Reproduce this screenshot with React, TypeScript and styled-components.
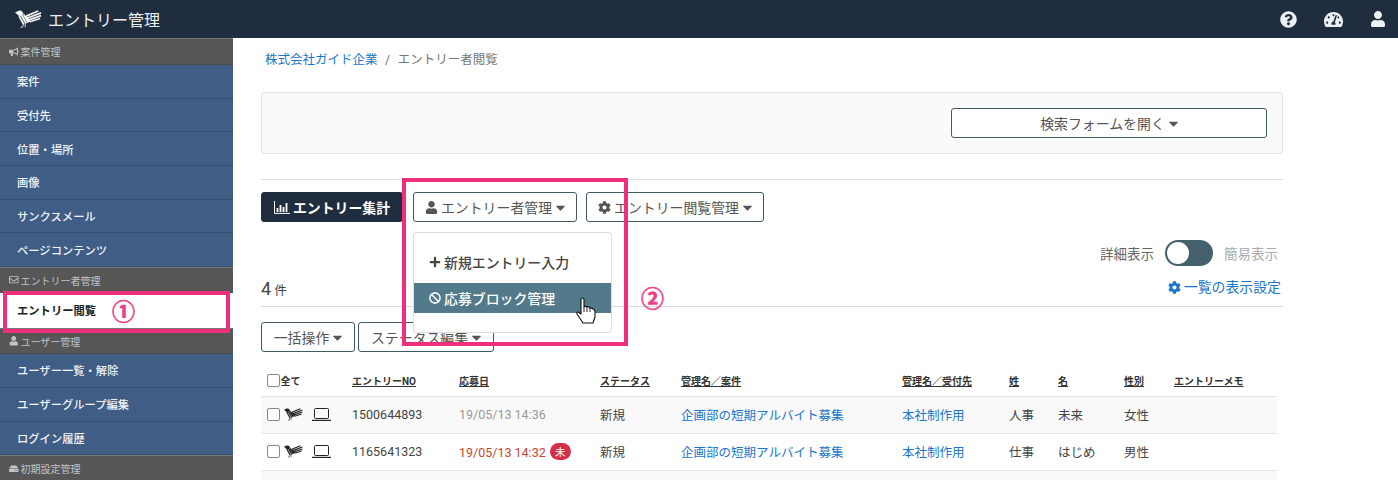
import React from 'react';
import styled, { createGlobalStyle } from 'styled-components';
import {
  FaBan, FaBullhorn, FaCaretDown, FaCog, FaHdd, FaPlus, FaQuestionCircle,
  FaRegEnvelope, FaTachometerAlt, FaUser,
} from 'react-icons/fa';

const GlobalStyle = createGlobalStyle`
  html, body { margin: 0; padding: 0; background: #fff; }
  body { font-family: Roboto, "Noto Sans CJK JP", "Liberation Sans", sans-serif; color: #444; }
  * { box-sizing: border-box; }
`;

//#region Styled Components
const Page = styled.div`
  position: relative;
  width: 1398px;
  height: 480px;
  overflow: hidden;
`;

const NavBar = styled.header`
  height: 38px;
  background: #1f2d3e;
  color: #eef1f3;
  display: flex;
  align-items: center;
  padding: 0 12px 0 15px;
`;

const Brand = styled.div`
  display: flex;
  align-items: center;
  gap: 6px;
  font-size: 16px;
  flex: 1;
`;

const NavIcons = styled.div`
  display: flex;
  align-items: center;
  gap: 27px;
  font-size: 17px;
  svg { display: block; }
`;

const Body = styled.div`
  display: flex;
  height: 442px;
`;

const Sidebar = styled.aside`
  width: 233px;
  flex: none;
  background: #555;
`;

const SideHeading = styled.div<{ $h: number }>`
  height: ${p => p.$h}px;
  background: #565656;
  border-top: 1px solid #777;
  border-bottom: 1px solid #484848;
  color: #c4c4c4;
  font-size: 10px;
  display: flex;
  align-items: center;
  gap: 2px;
  padding-left: 9px;
  svg { font-size: 9.5px; }
`;

const SideItem = styled.div<{ $active?: boolean }>`
  height: ${p => (p.$active ? 35 : 33.7)}px;
  background: ${p => (p.$active ? '#fff' : '#405d86')};
  border-bottom: 1px solid ${p => (p.$active ? '#fff' : '#34506f')};
  color: ${p => (p.$active ? '#222' : '#f2f4f7')};
  font-size: 11.3px;
  font-weight: ${p => (p.$active ? 700 : 500)};
  display: flex;
  align-items: center;
  padding-left: 17px;
`;

const Main = styled.main`
  width: 1022px;
  margin-left: 28px;
  flex: none;
`;

const Crumbs = styled.nav`
  height: 54px;
  padding: 13px 0 0 4px;
  font-size: 12.5px;
  line-height: 18px;
  color: #777;
  display: flex;
  gap: 7.5px;
`;

const Link = styled.a`
  color: #1b75c9;
  text-decoration: none;
`;

const SearchCard = styled.section`
  height: 62px;
  background: #fafafa;
  border: 1px solid #e2e2e2;
  border-radius: 3px;
  display: flex;
  align-items: center;
  justify-content: flex-end;
  padding-right: 15px;
`;

const Button = styled.button<{ $dark?: boolean; $w: number }>`
  width: ${p => p.$w}px;
  height: 30px;
  padding: 0;
  flex: none;
  display: inline-flex;
  align-items: center;
  justify-content: center;
  gap: 3px;
  font: inherit;
  font-size: 13.9px;
  font-weight: ${p => (p.$dark ? 700 : 400)};
  border-radius: 3px;
  border: 1px solid ${p => (p.$dark ? '#1f2d3e' : '#3f5a62')};
  background: ${p => (p.$dark ? '#1f2d3e' : '#fff')};
  color: ${p => (p.$dark ? '#fff' : '#555')};
  svg { flex: none; font-size: 13px; }
`;

const Caret = styled(FaCaretDown)`
  && { font-size: 15px; margin: 0 -3px 0 -2px; }
`;

const Rule = styled.hr`
  margin: 25px 0 12px;
  border: 0;
  border-top: 1px solid #e2e2e2;
`;

const Toolbar = styled.div`
  position: relative;
  display: flex;
  gap: 9px;
`;

const PrimaryWrap = styled.div`
  margin-right: 1px;
`;

const Dropdown = styled.div`
  position: absolute;
  left: 152px;
  top: 40px;
  z-index: 2;
  width: 199px;
  height: 101px;
  padding-top: 14px;
  background: #fff;
  border: 1px solid #ddd;
  border-radius: 3px;
`;

const MenuItem = styled.div<{ $hover?: boolean }>`
  height: 30px;
  display: flex;
  align-items: center;
  gap: 3px;
  padding-left: 15px;
  font-size: 13.9px;
  font-weight: 500;
  background: ${p => (p.$hover ? '#527a8a' : 'transparent')};
  color: ${p => (p.$hover ? '#fff' : '#444')};
  margin-bottom: 6px;
  svg { font-size: 12px; }
`;

const ViewSwitchRow = styled.div`
  height: 30px;
  margin-top: 16px;
  padding-right: 5px;
  display: flex;
  justify-content: flex-end;
  align-items: center;
  gap: 11px;
  font-size: 13.5px;
  color: #666;
`;

const MutedLabel = styled.span`
  color: #aaa;
`;

const Toggle = styled.div`
  width: 48px;
  height: 26px;
  border-radius: 13px;
  background: #43606b;
  padding: 2px;
  &::before {
    content: '';
    display: block;
    width: 22px;
    height: 22px;
    border-radius: 50%;
    background: #fff;
  }
`;

const CountRow = styled.div`
  height: 39px;
  padding-top: 9px;
  border-bottom: 1px solid #dcdcdc;
  display: flex;
  justify-content: space-between;
  align-items: flex-start;
`;

const Count = styled.div`
  font-size: 12.5px;
  padding: 0;
  line-height: 24px;
  color: #444;
  b { font-size: 18px; font-weight: 400; margin-right: 3px; }
`;

const SettingLink = styled(Link)`
  font-size: 13.9px;
  line-height: 20px;
  display: flex;
  align-items: center;
  gap: 3px;
  padding: 0 2px 0 0;
  svg { font-size: 13px; }
`;

const BulkRow = styled.div`
  display: flex;
  gap: 3px;
  margin-top: 15px;
`;

const Table = styled.table`
  width: 1016px;
  margin-top: 13px;
  border-collapse: collapse;
  table-layout: fixed;
  font-size: 12.5px;
`;

const Th = styled.th`
  height: 31px;
  padding: 0;
  text-align: left;
  font-size: 10px;
  font-weight: 700;
  color: #333;
  border-bottom: 1px solid #e6e6e6;
`;

const SortLabel = styled.span`
  text-decoration: underline;
`;

const Row = styled.tr<{ $odd?: boolean }>`
  background: ${p => (p.$odd ? '#f9f9f9' : '#fff')};
`;

const Td = styled.td`
  height: 37px;
  padding: 0;
  color: #444;
  border-bottom: 1px solid #e6e6e6;
  white-space: nowrap;
`;

const CheckCell = styled.div`
  display: flex;
  align-items: center;
  padding-left: 5.5px;
`;

const Check = styled.span`
  width: 13px;
  height: 13px;
  flex: none;
  background: #fff;
  border: 1px solid #888;
  border-radius: 2px;
  margin-right: 4px;
`;

const AllLabel = styled.span`
  margin-left: -3px;
`;

const DateText = styled.span<{ $new?: boolean }>`
  color: ${p => (p.$new ? '#c9472b' : '#999')};
`;

const Badge = styled.span`
  display: inline-flex;
  align-items: center;
  justify-content: center;
  width: 21px;
  height: 17px;
  margin-left: 4px;
  border-radius: 9px;
  background: #d32f4b;
  color: #fff;
  font-size: 10.5px;
  vertical-align: 1px;
`;

const Highlight = styled.div<{ $x: number; $y: number; $w: number; $h: number }>`
  position: absolute;
  left: ${p => p.$x}px;
  top: ${p => p.$y}px;
  width: ${p => p.$w}px;
  height: ${p => p.$h}px;
  border: 4px solid #ee2f7b;
  z-index: 5;
`;

const Mark = styled.div<{ $x: number; $y: number }>`
  position: absolute;
  left: ${p => p.$x}px;
  top: ${p => p.$y}px;
  z-index: 5;
  font-size: 23px;
  line-height: 30px;
  font-weight: 700;
  color: #ee3f85;
  -webkit-text-stroke: 0.6px #ee3f85;
`;

const Cursor = styled.svg`
  position: absolute;
  left: 575px;
  top: 297px;
  z-index: 6;
`;
//#endregion

const Bird: React.FC<{ w: number; color: string }> = ({ w, color }) => (
  <svg width={w} height={w * 0.66} viewBox="0 0 29 19" style={{ display: 'block', flex: 'none' }}>
    <path d="M0 2.5 L4 0.8 Q6.5 0 8 2 L9.5 4.5 L5 7 Z" fill={color} />
    <path d="M4.5 6.5 L9.5 15.5 M7 5.5 L12 14.5 M9.5 5 L14.2 13.5 M11.5 6.5 L16 12.5"
      stroke={color} strokeWidth="2" fill="none" />
    <path d="M12 6.5 L25 1 M13.5 8.5 L28 3 M15 10.5 L28 6 M16 12.5 L27 9"
      stroke={color} strokeWidth="1.8" fill="none" />
    <path d="M9 15.5 L8 18.5 H6 M11 15 V18.5" stroke={color} strokeWidth="0.9" fill="none" />
  </svg>
);

const Laptop = () => (
  <svg width="19" height="13" viewBox="0 0 19 13" style={{ display: 'block', marginLeft: 9 }}>
    <rect x="2.5" y="0.5" width="14" height="10" rx="1" fill="none" stroke="#222" />
    <path d="M0 12.4 H19" stroke="#222" strokeWidth="1.2" />
  </svg>
);

const BarAxis = () => (
  <svg width="16" height="13" viewBox="0 0 16 13">
    <path d="M0.5 0 V12.4 H16" stroke="#fff" fill="none" />
    <path d="M3.5 7 V11 M6.5 4 V11 M9.5 6 V11 M12.5 2 V11" stroke="#fff" strokeWidth="1.8" />
  </svg>
);

const sections: { title: string; icon: React.ReactNode; h: number; items: string[] }[] = [
  { title: '案件管理', icon: <FaBullhorn />, h: 27, items: ['案件', '受付先', '位置・場所', '画像', 'サンクスメール', 'ページコンテンツ'] },
  { title: 'エントリー者管理', icon: <FaRegEnvelope />, h: 26, items: ['エントリー閲覧'] },
  { title: 'ユーザー管理', icon: <FaUser />, h: 26, items: ['ユーザー一覧・解除', 'ユーザーグループ編集', 'ログイン履歴'] },
  { title: '初期設定管理', icon: <FaHdd />, h: 27, items: [] },
];

const columns = [91, 107, 141, 81, 221, 107, 49, 66, 50, 103];
const headers = ['', 'エントリーNO', '応募日', 'ステータス', '管理名／案件', '管理名／受付先', '姓', '名', '性別', 'エントリーメモ'];

const rows = [
  { no: '1500644893', date: '19/05/13 14:36', isNew: false, last: '人事', first: '未来', sex: '女性' },
  { no: '1165641323', date: '19/05/13 14:32', isNew: true, last: '仕事', first: 'はじめ', sex: '男性' },
];

export default function App() {
  return (
    <Page>
      <GlobalStyle />
      <NavBar>
        <Brand>
          <Bird w={27} color="#f1f3f4" />
          エントリー管理
        </Brand>
        <NavIcons>
          <FaQuestionCircle />
          <FaTachometerAlt style={{ fontSize: 19 }} />
          <FaUser style={{ fontSize: 16 }} />
        </NavIcons>
      </NavBar>
      <Body>
        <Sidebar>
          {sections.map(s => (
            <React.Fragment key={s.title}>
              <SideHeading $h={s.h}>{s.icon}{s.title}</SideHeading>
              {s.items.map(i => (
                <SideItem key={i} $active={i === 'エントリー閲覧'}>{i}</SideItem>
              ))}
            </React.Fragment>
          ))}
        </Sidebar>
        <Main>
          <Crumbs>
            <Link>株式会社ガイド企業</Link>
            <span>/</span>
            <span>エントリー者閲覧</span>
          </Crumbs>
          <SearchCard>
            <Button $w={316}>検索フォームを開く<Caret /></Button>
          </SearchCard>
          <Rule />
          <Toolbar>
            <PrimaryWrap>
              <Button $dark $w={142}><BarAxis />エントリー集計</Button>
            </PrimaryWrap>
            <Button $w={164}><FaUser />エントリー者管理<Caret /></Button>
            <Button $w={178}><FaCog />エントリー閲覧管理<Caret /></Button>
            <Dropdown>
              <MenuItem><FaPlus />新規エントリー入力</MenuItem>
              <MenuItem $hover><FaBan />応募ブロック管理</MenuItem>
            </Dropdown>
          </Toolbar>
          <ViewSwitchRow>
            詳細表示
            <Toggle />
            <MutedLabel>簡易表示</MutedLabel>
          </ViewSwitchRow>
          <CountRow>
            <Count><b>4</b>件</Count>
            <SettingLink><FaCog />一覧の表示設定</SettingLink>
          </CountRow>
          <BulkRow>
            <Button $w={94}>一括操作<Caret /></Button>
            <Button $w={136}>ステータス編集<Caret /></Button>
          </BulkRow>
          <Table>
            <colgroup>
              {columns.map((c, i) => <col key={i} style={{ width: c }} />)}
            </colgroup>
            <thead>
              <tr>
                {headers.map((h, i) => (
                  <Th key={i}>
                    {i === 0 ? <CheckCell><Check /><AllLabel>全て</AllLabel></CheckCell> : <SortLabel>{h}</SortLabel>}
                  </Th>
                ))}
              </tr>
            </thead>
            <tbody>
              {rows.map((r, idx) => (
                <Row key={r.no} $odd={idx === 0}>
                  <Td>
                    <CheckCell><Check /><Bird w={19} color="#222" /><Laptop /></CheckCell>
                  </Td>
                  <Td>{r.no}</Td>
                  <Td>
                    <DateText $new={r.isNew}>{r.date}</DateText>
                    {r.isNew && <Badge>未</Badge>}
                  </Td>
                  <Td>新規</Td>
                  <Td><Link>企画部の短期アルバイト募集</Link></Td>
                  <Td><Link>本社制作用</Link></Td>
                  <Td>{r.last}</Td>
                  <Td>{r.first}</Td>
                  <Td>{r.sex}</Td>
                  <Td />
                </Row>
              ))}
              <Row $odd><Td colSpan={10} /></Row>
            </tbody>
          </Table>
        </Main>
      </Body>
      <Highlight $x={3} $y={291} $w={227} $h={42} />
      <Highlight $x={402} $y={178} $w={226} $h={168} />
      <Mark $x={112} $y={298}>①</Mark>
      <Mark $x={641} $y={285}>②</Mark>
      <Cursor width="22" height="28" viewBox="0 0 22 28">
        <path d="M6 2.5 Q6 1 7.5 1 Q9 1 9 2.5 V10 Q10.5 8.5 12 10 Q13.5 9 15 11 Q16.5 10.5 18 12 Q20 12.5 20 15 V20 L18 26 H8 L2 17 Q1 15 3 15 L6 17 Z"
          fill="#fff" stroke="#111" strokeWidth="1.1" strokeLinejoin="round" />
        <path d="M9 10 V15 M12 10 V15 M15 11 V15" stroke="#111" strokeWidth="0.9" />
      </Cursor>
    </Page>
  );
}
